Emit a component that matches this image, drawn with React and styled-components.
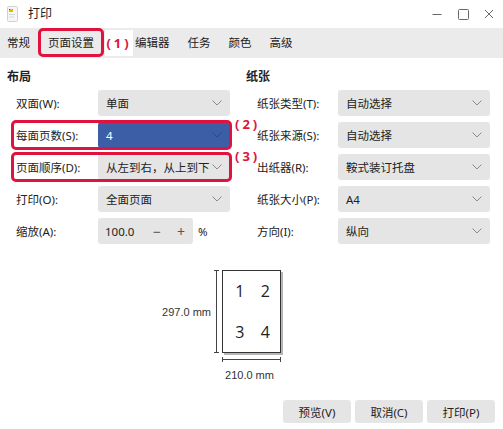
import React from "react";
import styled, { createGlobalStyle, css } from "styled-components";

const RED = "#e0123e";

const GlobalStyle = createGlobalStyle`
  html, body { margin: 0; padding: 0; background: #fff; }
  body {
    font-family: "Noto Sans", "Noto Sans CJK SC", sans-serif;
    font-size: 11.5px;
    color: #222;
  }
`;

const Window = styled.div`
  width: 503px;
  height: 429px;
  display: flex;
  flex-direction: column;
  background: #fff;
  overflow: hidden;
`;

const TitleBar = styled.div`
  height: 28px;
  display: flex;
  align-items: center;
  padding-left: 7px;
  padding-right: 1px;
`;

const TitleText = styled.span`
  margin-left: 10px;
  font-size: 12px;
  line-height: 16px;
`;

const Controls = styled.div`
  margin-left: auto;
  display: flex;
  height: 100%;
`;

const ControlButton = styled.div`
  width: 26px;
  height: 100%;
  display: flex;
  align-items: center;
  justify-content: center;
  color: #666;
`;

const TabBar = styled.div`
  height: 30px;
  background: #ebebeb;
  display: flex;
  align-items: center;
  gap: 18px;
  padding-left: 7px;
`;

const Tab = styled.div`
  line-height: 16px;
  white-space: nowrap;
  ${(p) =>
    p.$marked &&
    css`
      align-self: flex-start;
      box-sizing: border-box;
      height: 29px;
      display: flex;
      align-items: center;
      padding: 0 7px;
      margin: 0 -10px;
      border: 3px solid ${RED};
      border-radius: 5px;
    `}
`;

const TabNote = styled.div`
  width: 28px;
  height: 26px;
  margin: 0 -16px 0 -7px;
  background: #fff;
  display: flex;
  align-items: center;
  justify-content: center;
  color: ${RED};
  font-weight: bold;
  font-size: 13px;
  letter-spacing: 3px;
`;

const Content = styled.div`
  flex: 1;
  display: flex;
  flex-direction: column;
`;

const Columns = styled.div`
  display: grid;
  grid-template-columns: 223px 244px;
  column-gap: 16px;
  padding: 11px 0 0 7px;
`;

const Section = styled.div`
  display: flex;
  flex-direction: column;
  gap: 6px;
`;

const Heading = styled.div`
  font-weight: bold;
  font-size: 12px;
  line-height: 16px;
  margin-bottom: -1px;
`;

const Row = styled.div`
  position: relative;
  height: 26px;
  display: grid;
  grid-template-columns: ${(p) => p.$labelW}px 1fr;
  align-items: center;
  padding-left: ${(p) => p.$pad}px;
  ${(p) =>
    p.$mark &&
    css`
      &::before {
        content: "";
        position: absolute;
        left: 4px;
        right: -2px;
        top: -2px;
        bottom: -2px;
        border: 3px solid ${RED};
        border-radius: 5px;
        pointer-events: none;
      }
    `}
`;

const RowNote = styled.span`
  position: absolute;
  left: calc(100% + 5px);
  top: -5px;
  color: ${RED};
  font-weight: bold;
  font-size: 13px;
  line-height: 14px;
  letter-spacing: 3px;
  white-space: nowrap;
`;

const Label = styled.span`
  white-space: nowrap;
`;

const Combo = styled.div`
  height: 26px;
  box-sizing: border-box;
  border-radius: 3px;
  background: ${(p) => (p.$selected ? "#3b5ea7" : "#e5e5e5")};
  color: ${(p) => (p.$selected ? "#fff" : "#222")};
  display: flex;
  align-items: center;
  justify-content: space-between;
  padding: 0 8px 0 8px;
  white-space: nowrap;
`;

const SpinWrap = styled.div`
  display: flex;
  align-items: center;
`;

const Spin = styled.div`
  width: 95px;
  height: 26px;
  border-radius: 3px;
  background: #e5e5e5;
  display: grid;
  grid-template-columns: 1fr 24px 24px;
  align-items: center;
`;

const SpinValue = styled.span`
  padding-left: 7px;
`;

const SpinButton = styled.span`
  text-align: center;
  color: #555;
  font-size: 14px;
`;

const Percent = styled.span`
  margin-left: 5px;
`;

const PreviewArea = styled.div`
  margin-top: 26px;
  display: flex;
  justify-content: center;
`;

const PreviewGrid = styled.div`
  display: grid;
  grid-template-columns: 62px 59px 62px;
  grid-template-rows: 83px auto auto;
`;

const HeightCell = styled.div`
  display: flex;
  justify-content: flex-end;
  align-items: center;
`;

const DimText = styled.span`
  font-family: "Liberation Sans", sans-serif;
  font-size: 11px;
  color: #333;
  white-space: nowrap;
`;

const VLine = styled.div`
  width: 5px;
  height: 100%;
  box-sizing: border-box;
  border-top: 1px solid #444;
  border-bottom: 1px solid #444;
  background: linear-gradient(#444, #444) center / 1px 100% no-repeat;
  margin: 0 3px 0 3px;
`;

const Page = styled.div`
  box-sizing: border-box;
  border: 1px solid #333;
  box-shadow: 2px 2px 0 #b5b5b5;
  display: grid;
  grid-template-columns: 1fr 1fr;
  grid-template-rows: 1fr 1fr;
  place-items: center;
  padding: 0 2px 0 4px;
  font-family: "Open Sans", sans-serif;
  font-size: 16px;
  color: #222;
`;

const HLine = styled.div`
  grid-column: 2;
  height: 5px;
  margin-top: 4px;
  box-sizing: border-box;
  border-left: 1px solid #444;
  border-right: 1px solid #444;
  background: linear-gradient(#444, #444) center / 100% 1px no-repeat;
`;

const WidthText = styled(DimText)`
  grid-column: 2;
  justify-self: center;
  margin-top: 7px;
  margin-left: -4px;
`;

const Footer = styled.div`
  margin-top: auto;
  display: flex;
  justify-content: flex-end;
  gap: 4px;
  padding: 0 8px 6px 0;
`;

const Button = styled.button`
  width: 68px;
  height: 23px;
  border: none;
  border-radius: 3px;
  background: #e5e5e5;
  font: inherit;
  color: #222;
  padding: 0;
`;

const Chevron = ({ color = "#8a8a8a" }) => (
  <svg width="10" height="6" viewBox="0 0 10 6">
    <polyline points="0.5,0.5 5,5 9.5,0.5" fill="none" stroke={color} strokeWidth="1" />
  </svg>
);

const AppIcon = () => (
  <svg width="11" height="16" viewBox="0 0 11 16">
    <rect x="0.5" y="0.5" width="10" height="15" rx="1" fill="#f6f6f6" stroke="#d2d2d2" />
    <rect x="2" y="3" width="4" height="3" fill="#e9b800" />
    <rect x="2" y="3" width="1" height="1" fill="#555" />
    <rect x="2" y="8" width="6" height="1" fill="#d6d6d6" />
    <rect x="2" y="10.5" width="5" height="1" fill="#d6d6d6" />
  </svg>
);

const leftRows = [
  { label: "双面(W):", value: "单面" },
  { label: "每面页数(S):", value: "4", selected: true, note: "(2)" },
  { label: "页面顺序(D):", value: "从左到右，从上到下", note: "(3)" },
  { label: "打印(O):", value: "全面页面" },
];

const rightRows = [
  { label: "纸张类型(T):", value: "自动选择" },
  { label: "纸张来源(S):", value: "自动选择" },
  { label: "出纸器(R):", value: "鞍式装订托盘" },
  { label: "纸张大小(P):", value: "A4" },
  { label: "方向(I):", value: "纵向" },
];

export default function App() {
  return (
    <>
      <GlobalStyle />
      <Window>
        <TitleBar>
          <AppIcon />
          <TitleText>打印</TitleText>
          <Controls>
            <ControlButton>
              <svg width="10" height="10" viewBox="0 0 10 10">
                <line x1="0.5" y1="5.5" x2="9.5" y2="5.5" stroke="#666" />
              </svg>
            </ControlButton>
            <ControlButton>
              <svg width="11" height="11" viewBox="0 0 11 11">
                <rect x="0.5" y="0.5" width="10" height="10" rx="1" fill="none" stroke="#666" />
              </svg>
            </ControlButton>
            <ControlButton>
              <svg width="10" height="10" viewBox="0 0 10 10">
                <path d="M1 1 L9 9 M9 1 L1 9" stroke="#666" />
              </svg>
            </ControlButton>
          </Controls>
        </TitleBar>
        <TabBar>
          <Tab>常规</Tab>
          <Tab $marked>页面设置</Tab>
          <TabNote>(1)</TabNote>
          <Tab>编辑器</Tab>
          <Tab>任务</Tab>
          <Tab>颜色</Tab>
          <Tab>高级</Tab>
        </TabBar>
        <Content>
          <Columns>
            <Section>
              <Heading>布局</Heading>
              {leftRows.map((r) => (
                <Row key={r.label} $labelW={82} $pad={9} $mark={!!r.note}>
                  <Label>{r.label}</Label>
                  <Combo $selected={r.selected}>
                    <span>{r.value}</span>
                    <Chevron color={r.selected ? "#26488c" : "#8a8a8a"} />
                  </Combo>
                  {r.note && <RowNote>{r.note}</RowNote>}
                </Row>
              ))}
              <Row $labelW={82} $pad={9}>
                <Label>缩放(A):</Label>
                <SpinWrap>
                  <Spin>
                    <SpinValue>100.0</SpinValue>
                    <SpinButton>−</SpinButton>
                    <SpinButton>+</SpinButton>
                  </Spin>
                  <Percent>%</Percent>
                </SpinWrap>
              </Row>
            </Section>
            <Section>
              <Heading>纸张</Heading>
              {rightRows.map((r) => (
                <Row key={r.label} $labelW={81} $pad={11}>
                  <Label>{r.label}</Label>
                  <Combo>
                    <span>{r.value}</span>
                    <Chevron />
                  </Combo>
                </Row>
              ))}
            </Section>
          </Columns>
          <PreviewArea>
            <PreviewGrid>
              <HeightCell>
                <DimText>297.0 mm</DimText>
                <VLine />
              </HeightCell>
              <Page>
                <span>1</span>
                <span>2</span>
                <span>3</span>
                <span>4</span>
              </Page>
              <div />
              <HLine />
              <WidthText>210.0 mm</WidthText>
            </PreviewGrid>
          </PreviewArea>
          <Footer>
            <Button>预览(V)</Button>
            <Button>取消(C)</Button>
            <Button>打印(P)</Button>
          </Footer>
        </Content>
      </Window>
    </>
  );
}
